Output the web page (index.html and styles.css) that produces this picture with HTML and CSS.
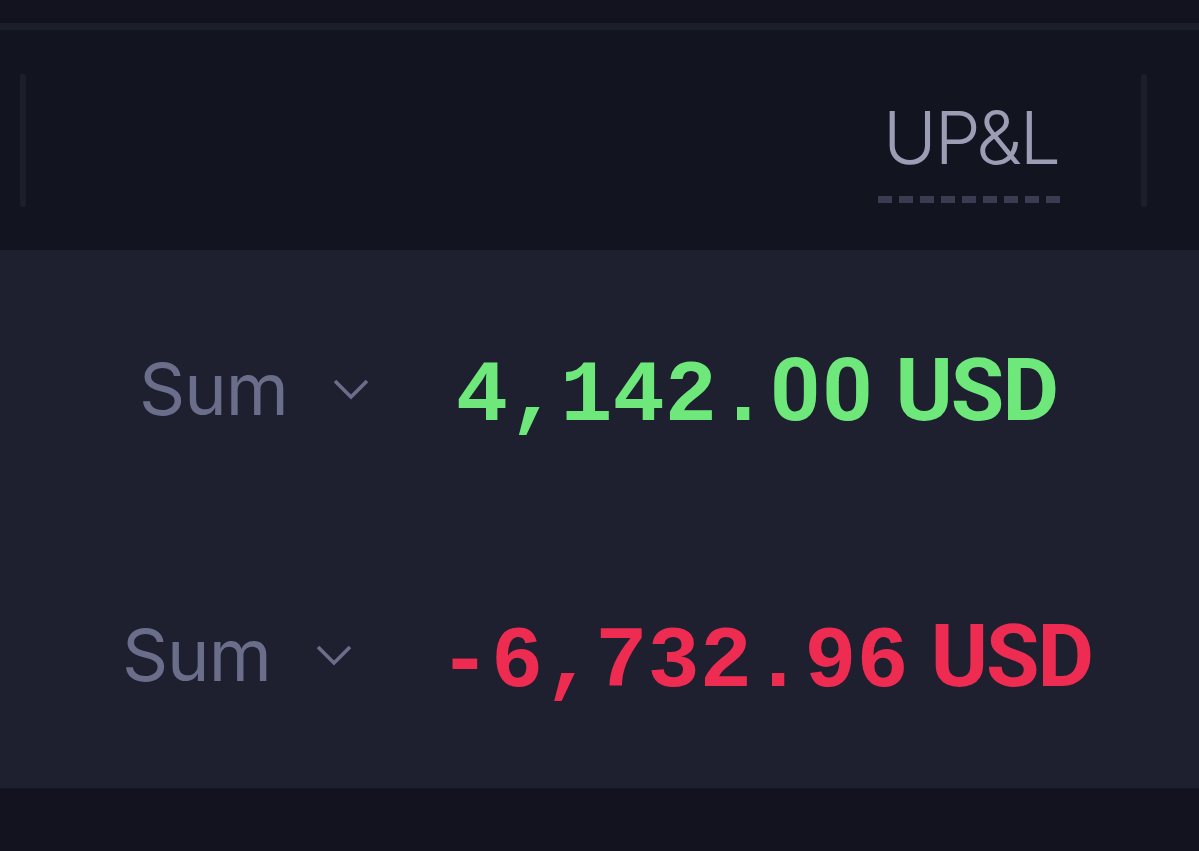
FILE: index.html
```html
<!DOCTYPE html>
<html>
<head>
<meta charset="utf-8">
<link rel="stylesheet" href="styles.css">
</head>
<body>
<div class="top"></div>
<div class="divider"></div>
<div class="header">
  <div class="vbar"></div>
  <div class="head-main">
    <div class="title-wrap">
      <span class="title">UP&amp;L</span>
      <span class="dashes"></span>
    </div>
  </div>
  <div class="vbar"></div>
</div>
<div class="panel">
  <div class="row row1">
    <div class="agg"><span class="agg-label">Sum</span>
      <svg class="chev" viewBox="0 0 36 22" width="36" height="22"><path d="M2 2 L18 18 L34 2" fill="none" stroke="#6b6e8a" stroke-width="3.6"/></svg>
    </div>
    <div class="value pos"><span class="num">4,142.<span class="z">0</span><span class="z">0</span></span><span class="cur">USD</span></div>
  </div>
  <div class="row row2">
    <div class="agg"><span class="agg-label">Sum</span>
      <svg class="chev" viewBox="0 0 36 22" width="36" height="22"><path d="M2 2 L18 18 L34 2" fill="none" stroke="#6b6e8a" stroke-width="3.6"/></svg>
    </div>
    <div class="value neg"><span class="num">-6,732.96</span><span class="cur">USD</span></div>
  </div>
</div>
<div class="bottom"></div>
</body>
</html>
```
FILE: styles.css
```css
html, body {
  margin: 0;
  padding: 0;
}
body {
  background: #12131f;
  width: 1199px;
  height: 851px;
  overflow: hidden;
  font-family: Inter, "Noto Sans", sans-serif;
}
.top {
  height: 23px;
  background: #12131f;
}
.divider {
  height: 7px;
  background: #1c1e2c;
}
.header {
  height: 220px;
  background: #121420;
  display: flex;
  align-items: center;
  padding: 0 52px 0 20px;
}
.vbar {
  width: 6px;
  height: 133px;
  background: #1c1e2c;
  border-radius: 2px;
}
.head-main {
  flex: 1;
  display: flex;
  justify-content: flex-end;
  padding-right: 81px;
}
.title-wrap {
  display: flex;
  flex-direction: column;
  align-items: center;
  padding-top: 22px;
}
.title {
  font-size: 73px;
  font-weight: 300;
  line-height: 76px;
  color: #9b9db5;
  letter-spacing: -2px;
  padding-left: 4px;
}
.dashes {
  display: block;
  width: 182px;
  height: 7px;
  margin-top: 20px;
  background: repeating-linear-gradient(90deg, #3a3d52 0 14px, transparent 14px 21px);
}
.panel {
  height: 538px;
  background: #1e2030;
  display: flex;
  flex-direction: column;
  padding-top: 73px;
  box-sizing: border-box;
}
.row {
  height: 130px;
  display: flex;
  align-items: center;
  justify-content: center;
  gap: 87px;
}
.row1 {
  padding-right: 3px;
}
.row2 {
  margin-top: 136px;
  padding-left: 15px;
}
.agg {
  display: flex;
  align-items: center;
  gap: 45px;
}
.agg-label {
  font-size: 72px;
  color: #6b6e8a;
  letter-spacing: -1px;
}
.chev {
  display: block;
  margin-top: 4px;
}
.value {
  display: flex;
  align-items: baseline;
  font-weight: 700;
  margin-top: 8px;
}
.num {
  font-family: "Liberation Mono", "DejaVu Sans Mono", monospace;
  font-size: 87px;
}
.z {
  display: inline-block;
  width: 0.6em;
  text-align: center;
  font-family: Roboto, "Liberation Sans", sans-serif;
  font-weight: 700;
}
.cur {
  font-family: Roboto, Inter, sans-serif;
  font-size: 87px;
  margin-left: 22px;
  letter-spacing: -2px;
}
.pos { color: #6ee87a; }
.neg { color: #ee2c52; }
.bottom {
  height: 63px;
  background: #12131f;
  border-top: 1px solid #151725;
}
```
